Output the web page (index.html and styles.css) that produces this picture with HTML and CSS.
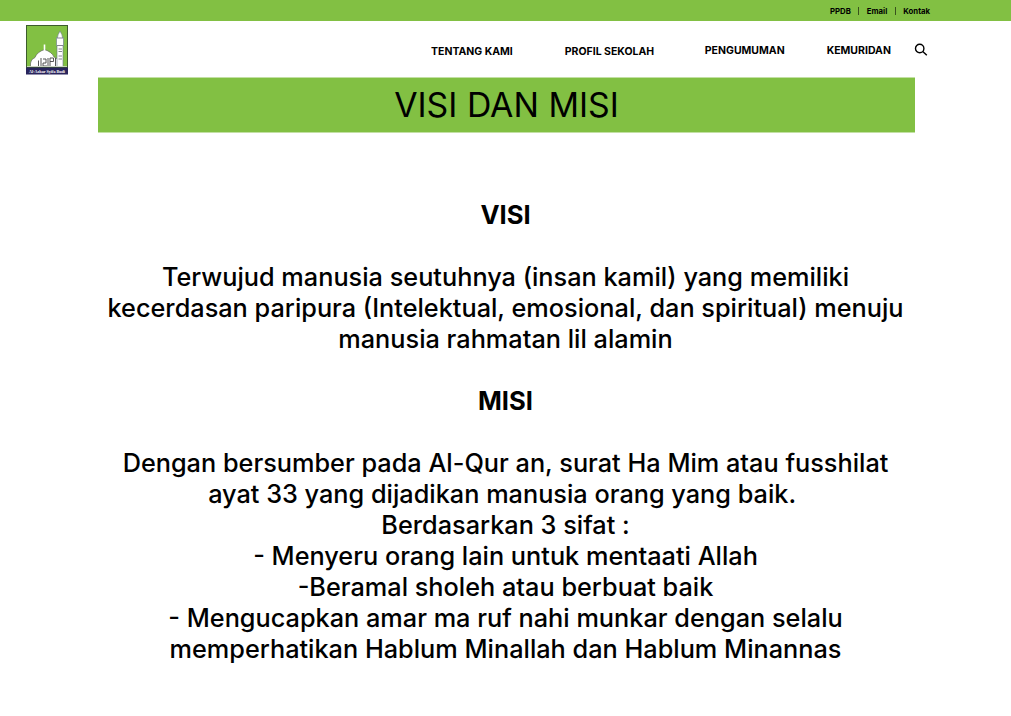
FILE: index.html
```html
<!DOCTYPE html>
<html lang="id">
<head>
<meta charset="utf-8">
<title>Visi dan Misi</title>
<link rel="stylesheet" href="styles.css">
</head>
<body>
<div class="topbar">
  <a class="top-link">PPDB</a><span class="divider"></span><a class="top-link">Email</a><span class="divider"></span><a class="top-link">Kontak</a>
</div>
<header class="header">
  <svg class="logo" viewBox="0 0 42 50">
    <rect y="42" width="42" height="7.500" fill="#29245c"/>
    <rect x=".5" y=".5" width="41" height="41.500" fill="#82c043" stroke="#3d5c2c" stroke-width="1"/>
    <path d="M4.500 41.500V38Q5 34 9 32.500Q11 27 18.500 24.500Q26 27 28 32Q33 34 35 41.500Z" fill="#fff" stroke="#555" stroke-width=".6"/>
    <path d="M18.500 19.500V25" stroke="#fff" stroke-width="1.600"/>
    <path d="M31 41.500V21H30.500V12.500H31.500Q31.500 10 34 6Q36.500 10 36.500 12.500H37.500V21H37v20.500Z" fill="#fff" stroke="#678" stroke-width=".6"/>
    <path d="M31 13h6M31 20.500h6M32.500 24h3.500M32.500 26.500h3.500M32.500 31h3.500M32.500 34h3.500" stroke="#667" stroke-width=".8"/>
    <path d="M15 33v8M17 34h3v4h-3v3h4M22 33v8M24 41v-8h3.500v3.500H24M29.500 33v8M12.500 35.500V41" fill="none" stroke="#444" stroke-width=".9"/>
    <path d="M1 41.500h40" stroke="#dfe8d5" stroke-width=".8"/>
    <text class="logo-text" x="21" y="47.500" text-anchor="middle" textLength="36" lengthAdjust="spacingAndGlyphs">Al-Azhar Syifa Budi</text>
  </svg>
  <nav class="nav">
    <a class="nav-link low tentang">TENTANG KAMI</a>
    <a class="nav-link low profil">PROFIL SEKOLAH</a>
    <a class="nav-link pengumuman">PENGUMUMAN</a>
    <a class="nav-link">KEMURIDAN</a>
  </nav>
  <svg class="search" viewBox="0 0 14 14"><circle cx="5.700" cy="5.500" r="4.200"/><path d="M8.800 8.600 12.800 12.300"/></svg>
</header>
<main class="main">
  <h1 class="banner">VISI DAN MISI</h1>
  <section class="content">
    <h2 class="heading">VISI</h2>
    <p class="copy">Terwujud manusia seutuhnya (insan kamil) yang memiliki<br>kecerdasan paripura (Intelektual, emosional, dan spiritual) menuju<br>manusia rahmatan lil alamin</p>
    <h2 class="heading">MISI</h2>
    <p class="copy">Dengan bersumber pada Al-Qur an, surat Ha Mim atau fusshilat<br>ayat 33 yang dijadikan manusia orang yang baik.&nbsp;<br>Berdasarkan 3 sifat :<br>- Menyeru orang lain untuk mentaati Allah<br>-Beramal sholeh atau berbuat baik<br>- Mengucapkan amar ma ruf nahi munkar dengan selalu<br>memperhatikan Hablum Minallah dan Hablum Minannas</p>
  </section>
</main>
</body>
</html>
```

FILE: styles.css
```css
* { box-sizing: border-box; }
body { margin: 0; height: 716px; overflow: hidden; background: #fff; color: #000; font-family: Inter, sans-serif; }
.topbar { height: 21px; padding: 1px 81px 0 0; background: #82c043; display: flex; align-items: center; justify-content: flex-end; }
.top-link { font-size: 7.750px; font-weight: 700; line-height: 11px; }
.divider { width: 1px; height: 8px; margin: 0 7.500px; background: #38521d; }
.header { height: 56px; display: flex; align-items: flex-start; padding-left: 26px; }
.logo { width: 42px; height: 50px; margin-top: 4px; }
.logo-text { font: bold 4.200px "Liberation Serif", serif; fill: #fff; }
.nav { display: flex; margin: 22.500px 0 0 363px; }
.nav-link { font-size: 10.500px; font-weight: 700; line-height: 14px; white-space: nowrap; }
.low { padding-top: 1.300px; }
.tentang { margin-right: 52px; }
.profil { margin-right: 50.600px; }
.pengumuman { margin-right: 42px; }
.search { width: 14px; height: 14px; margin: 22px 0 0 23.500px; fill: none; stroke: #000; stroke-width: 1.400; }
.banner { width: 817px; height: 56px; margin: 0 0 0 98px; background: #82c043; border: solid #c3e0a4; border-width: 1px 0; font-size: 33.800px; font-weight: 400; line-height: 53px; text-align: center; }
.content { width: 817px; margin: 66px 0 0 97px; text-align: center; font-size: 25.600px; line-height: 31px; }
.heading { margin: 0 0 32px; font-size: inherit; font-weight: 700; }
.copy { margin: 0 0 30px; font-size: 25.290px; font-weight: 500; white-space: nowrap; }
```
